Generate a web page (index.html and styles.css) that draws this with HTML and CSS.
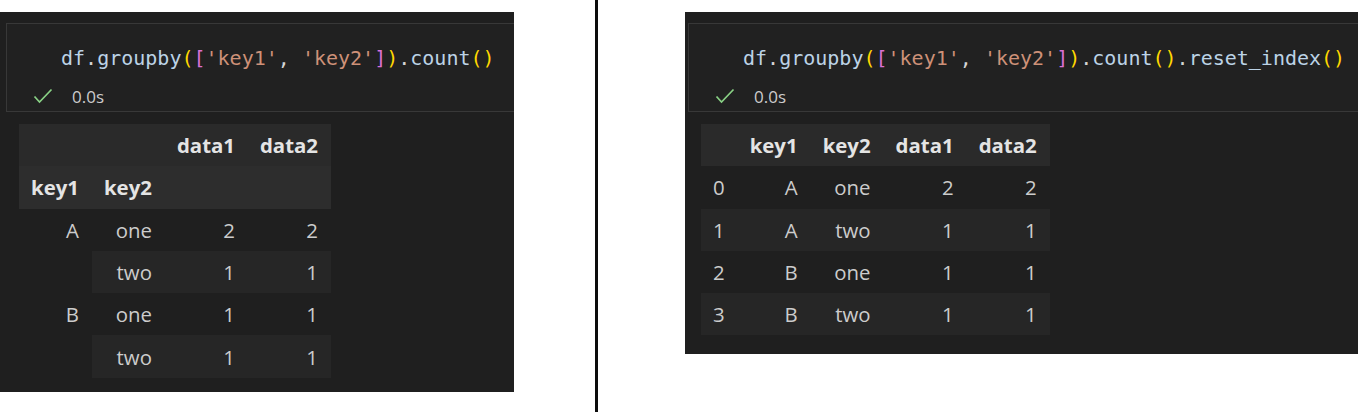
FILE: index.html
```html
<!DOCTYPE html>
<html>
<head>
<meta charset="utf-8">
<link rel="stylesheet" href="styles.css">
</head>
<body>
<div class="page">
  <section class="panel panel-left">
    <div class="cell">
      <div class="code"><span class="id">df</span><span class="pn">.</span><span class="id">groupby</span><span class="b1">(</span><span class="b2">[</span><span class="str">'key1'</span><span class="pn">, </span><span class="str">'key2'</span><span class="b2">]</span><span class="b1">)</span><span class="pn">.</span><span class="id">count</span><span class="b1">()</span></div>
      <div class="status">
        <svg class="check" width="20" height="16" viewBox="0 0 20 16"><polyline points="1.5,8.5 6.5,14 18.5,1.5" fill="none" stroke="#89d185" stroke-width="1.7"/></svg>
        <span class="time">0.0s</span>
      </div>
    </div>
    <table class="df">
      <thead>
        <tr class="hrow1"><th></th><th></th><th>data1</th><th>data2</th></tr>
        <tr class="hrow2"><th>key1</th><th>key2</th><th></th><th></th></tr>
      </thead>
      <tbody>
        <tr><th rowspan="2" class="idx grp">A</th><th class="idx">one</th><td>2</td><td>2</td></tr>
        <tr class="shade"><th class="idx">two</th><td>1</td><td>1</td></tr>
        <tr><th rowspan="2" class="idx grp">B</th><th class="idx">one</th><td>1</td><td>1</td></tr>
        <tr class="shade"><th class="idx">two</th><td>1</td><td>1</td></tr>
      </tbody>
    </table>
  </section>
  <div class="divider"></div>
  <section class="panel panel-right">
    <div class="cell">
      <div class="code"><span class="id">df</span><span class="pn">.</span><span class="id">groupby</span><span class="b1">(</span><span class="b2">[</span><span class="str">'key1'</span><span class="pn">, </span><span class="str">'key2'</span><span class="b2">]</span><span class="b1">)</span><span class="pn">.</span><span class="id">count</span><span class="b1">()</span><span class="pn">.</span><span class="id">reset_index</span><span class="b1">()</span></div>
      <div class="status">
        <svg class="check" width="20" height="16" viewBox="0 0 20 16"><polyline points="1.5,8.5 6.5,14 18.5,1.5" fill="none" stroke="#89d185" stroke-width="1.7"/></svg>
        <span class="time">0.0s</span>
      </div>
    </div>
    <table class="df">
      <thead>
        <tr class="hrow1"><th></th><th>key1</th><th>key2</th><th>data1</th><th>data2</th></tr>
      </thead>
      <tbody>
        <tr><th class="idx">0</th><td>A</td><td>one</td><td>2</td><td>2</td></tr>
        <tr class="shade"><th class="idx">1</th><td>A</td><td>two</td><td>1</td><td>1</td></tr>
        <tr><th class="idx">2</th><td>B</td><td>one</td><td>1</td><td>1</td></tr>
        <tr class="shade"><th class="idx">3</th><td>B</td><td>two</td><td>1</td><td>1</td></tr>
      </tbody>
    </table>
  </section>
</div>
</body>
</html>
```

FILE: styles.css
```css
html, body {
  margin: 0;
  padding: 0;
  background: #ffffff;
}

.page {
  display: flex;
  align-items: flex-start;
  width: 1358px;
  height: 414px;
  overflow: hidden;
}

.panel {
  background: #1f1f1f;
  margin-top: 12px;
  overflow: hidden;
  box-sizing: border-box;
}

.panel-left {
  width: 514px;
  height: 380px;
  padding-left: 6px;
  flex: none;
}

.panel-right {
  margin-left: 87px;
  flex: 1;
  height: 342px;
  padding-left: 3px;
}

.divider {
  flex: none;
  width: 3px;
  height: 412px;
  margin-left: 81px;
  background: #0c0c0c;
}

.cell {
  margin-top: 11px;
  width: 1000px;
  height: 89px;
  box-sizing: border-box;
  border: 1px solid #383838;
  background: #212121;
  padding-top: 22px;
}

.code {
  font-family: "DejaVu Sans Mono", "Liberation Mono", monospace;
  font-size: 20px;
  line-height: 24px;
  padding-left: 54px;
  white-space: pre;
  color: #d4d4d4;
}

.id { color: #bcd3e6; }
.pn { color: #d4d4d4; }
.str { color: #ce9178; }
.b1 { color: #ffd700; }
.b2 { color: #da70d6; }

.status {
  display: flex;
  align-items: center;
  margin-top: 14px;
  height: 24px;
  padding-left: 26px;
}

.check {
  display: block;
}

.time {
  margin-left: 19px;
  font-family: "Open Sans", "Noto Sans", sans-serif;
  font-size: 17px;
  color: #cccccc;
}

.df {
  margin-top: 12px;
  margin-left: 13px;
  border-collapse: collapse;
  border-spacing: 0;
  font-family: "Open Sans", "Noto Sans", sans-serif;
  font-size: 20.4px;
  color: #cccccc;
}

.df th, .df td {
  height: 42.3px;
  padding: 0 13px 0 12px;
  text-align: right;
  vertical-align: middle;
  white-space: nowrap;
  line-height: 42px;
}

.df thead th {
  font-weight: 700;
  color: #e4e4e4;
}

.df .hrow1 { background: #2a2a2a; }
.df .hrow2 { background: #2d2d2d; }

.df tbody th {
  font-weight: 400;
}

.df .shade { background: #262626; }

.df .grp {
  vertical-align: top;
  background: #1f1f1f;
}
```
